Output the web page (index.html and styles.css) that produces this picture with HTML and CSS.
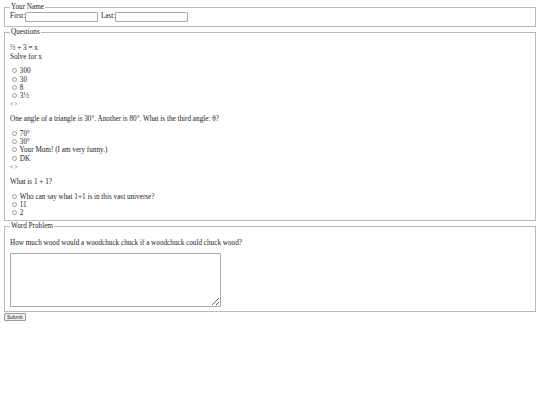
FILE: index.html
```html
<!DOCTYPE html>
<html>
<head>
<meta charset="utf-8">
<title>Quiz</title>
<link rel="stylesheet" href="styles.css">
</head>
<body>
<form class="quiz">
  <fieldset class="group name-group">
    <legend class="title">Your Name</legend>
    <label>First:<input type="text" class="name-input"></label>
    <label>Last:<input type="text" class="name-input"></label>
  </fieldset>
  <fieldset class="group">
    <legend class="title">Questions</legend>
    <p class="question">½ + 3 = x<br>Solve for x</p>
    <label class="choice"><input type="radio" class="radio" name="q1"> 300</label><br>
    <label class="choice"><input type="radio" class="radio" name="q1"> 30</label><br>
    <label class="choice"><input type="radio" class="radio" name="q1"> 8</label><br>
    <label class="choice"><input type="radio" class="radio" name="q1"> 3½</label><br>
    <span class="nav">&lt; &gt;</span>
    <p class="question">One angle of a triangle is 30°. Another is 80°. What is the third angle: θ?</p>
    <label class="choice"><input type="radio" class="radio" name="q2"> 70°</label><br>
    <label class="choice"><input type="radio" class="radio" name="q2"> 30°</label><br>
    <label class="choice"><input type="radio" class="radio" name="q2"> Your Mom! (I am very funny.)</label><br>
    <label class="choice"><input type="radio" class="radio" name="q2"> DK</label><br>
    <span class="nav">&lt; &gt;</span>
    <p class="question">What is 1 + 1?</p>
    <label class="choice"><input type="radio" class="radio" name="q3"> Who can say what 1+1 is in this vast universe?</label><br>
    <label class="choice"><input type="radio" class="radio" name="q3"> 11</label><br>
    <label class="choice"><input type="radio" class="radio" name="q3"> 2</label>
  </fieldset>
  <fieldset class="group">
    <legend class="title">Word Problem</legend>
    <p class="question">How much wood would a woodchuck chuck if a woodchuck could chuck wood?</p>
    <textarea class="answer"></textarea>
  </fieldset>
  <input type="submit" value="Submit" class="submit">
</form>
</body>
</html>
```

FILE: styles.css
```css
body {
  margin: 2px 3px 3px;
  font-family: "Liberation Serif", "Times New Roman", serif;
  font-size: 7.2px;
  line-height: 8.2px;
  color: #1a1a1a;
  background: #fff;
}
.quiz {
  margin: 0;
}
.group {
  margin: 1px;
  padding: 1px 5px 3px;
  border: 1px solid #b9b9b9;
}
.name-group {
  padding-top: 0;
  padding-bottom: 4px;
}
.title {
  padding: 0 1px;
  margin: 0;
}
.name-input {
  width: 73px;
  height: 10px;
  box-sizing: border-box;
  margin: 1px 1px 0 0;
  padding: 0;
  border: 1px solid #a8a8a8;
  border-radius: 1px;
  font-size: 6px;
  vertical-align: middle;
}
.question {
  margin: 7px 0 6.5px;
}
.choice {
  white-space: nowrap;
}
.radio {
  appearance: none;
  -webkit-appearance: none;
  width: 5px;
  height: 5px;
  box-sizing: border-box;
  margin: 0 1px 0 2px;
  border: 1px solid #9a9a9a;
  border-radius: 50%;
  background: #fff;
  vertical-align: 0;
}
.nav {
  font-size: 5.4px;
  color: #555;
}
.answer {
  display: block;
  width: 211px;
  height: 54px;
  box-sizing: border-box;
  margin: 1px 0 1px;
  border: 1px solid #a8a8a8;
  border-radius: 1px;
}
.submit {
  display: block;
  margin: 1px 0 0 1px;
  padding: 0 2px;
  height: 8px;
  font-family: "Liberation Sans", Arial, sans-serif;
  font-size: 5px;
  line-height: 6px;
  color: #222;
  background: #efefef;
  border: 1px solid #9a9a9a;
  border-radius: 1px;
}
```
